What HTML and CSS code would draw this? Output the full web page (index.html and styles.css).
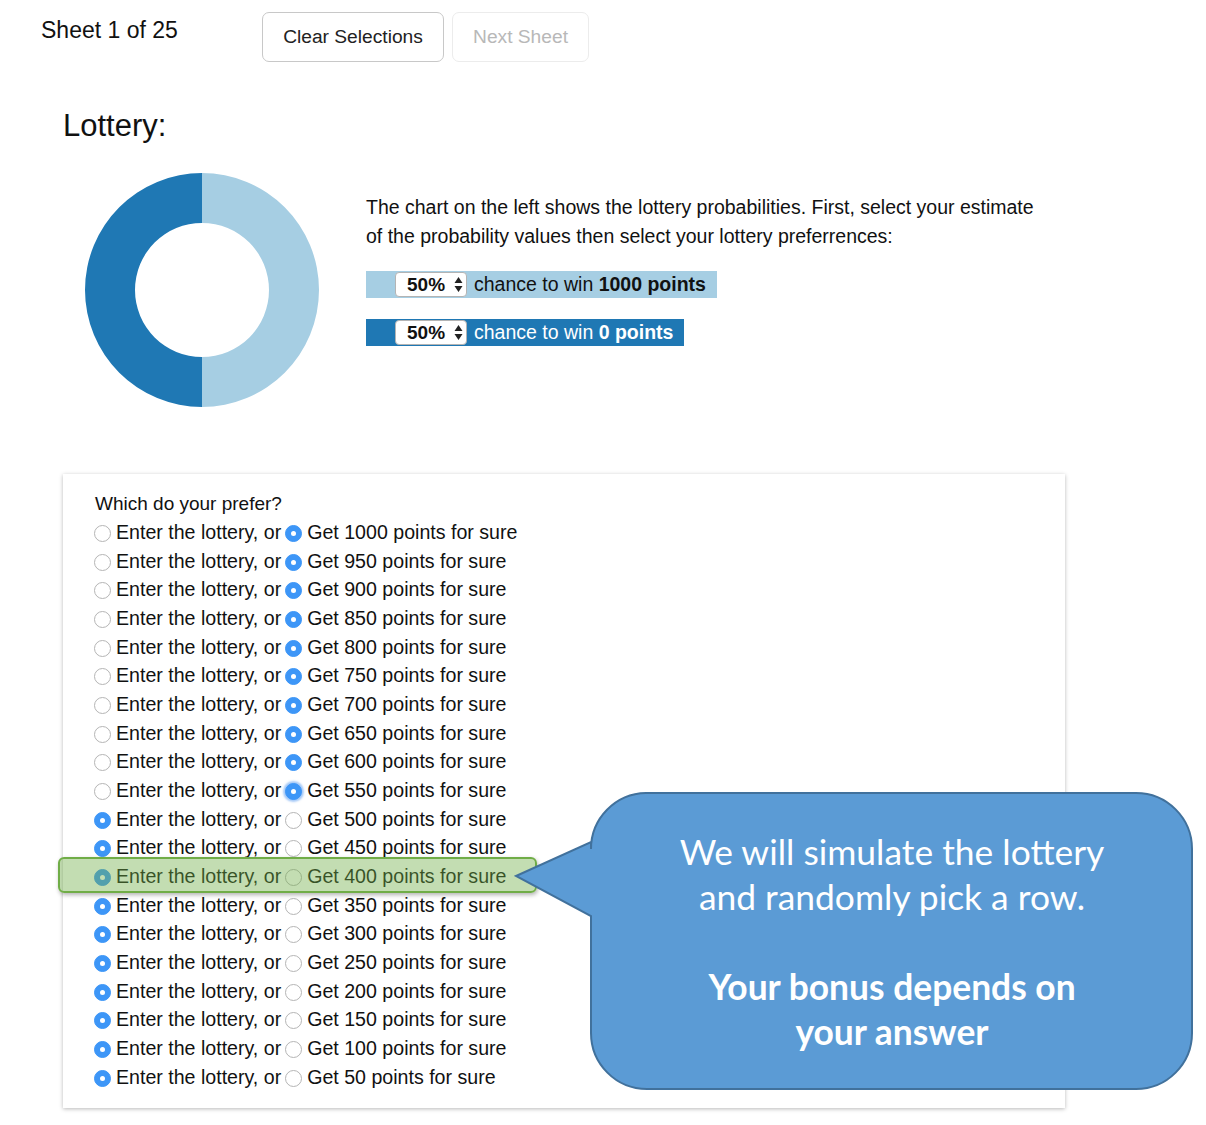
FILE: index.html
```html
<!DOCTYPE html>
<html>
<head>
<meta charset="utf-8">
<link rel="stylesheet" href="styles.css">
</head>
<body>
<div class="page">
  <header class="topbar">
    <div class="sheet-count">Sheet 1 of 25</div>
    <div class="actions">
      <button class="btn">Clear Selections</button>
      <button class="btn btn-disabled">Next Sheet</button>
    </div>
  </header>

  <h1 class="title">Lottery:</h1>

  <section class="lottery">
    <svg class="donut" width="236" height="236" viewBox="0 0 236 236">
      <path d="M118 1 A117 117 0 0 1 118 235 L118 185 A67 67 0 0 0 118 51 Z" fill="#a6cee3"/>
      <path d="M118 1 A117 117 0 0 0 118 235 L118 185 A67 67 0 0 1 118 51 Z" fill="#1f78b4"/>
    </svg>
    <div class="info">
      <p class="intro">The chart on the left shows the lottery probabilities. First, select your estimate of the probability values then select your lottery preferrences:</p>
      <div class="bar bar-light"><span class="pick">50%<svg class="arrows" width="9" height="17" viewBox="0 0 9 17"><path d="M4.5 1 L8.5 7 H0.5 Z M4.5 16 L8.5 10 H0.5 Z" fill="#222"/></svg></span><span>chance to win <b>1000 points</b></span></div>
      <div class="bar bar-dark"><span class="pick">50%<svg class="arrows" width="9" height="17" viewBox="0 0 9 17"><path d="M4.5 1 L8.5 7 H0.5 Z M4.5 16 L8.5 10 H0.5 Z" fill="#222"/></svg></span><span>chance to win <b>0 points</b></span></div>
    </div>
  </section>

  <section class="panel">
    <div class="question">Which do your prefer?</div>
    <div class="rows">
      <div class="row"><span class="radio"></span>Enter the lottery, or<span class="radio on"></span>Get 1000 points for sure</div>
      <div class="row"><span class="radio"></span>Enter the lottery, or<span class="radio on"></span>Get 950 points for sure</div>
      <div class="row"><span class="radio"></span>Enter the lottery, or<span class="radio on"></span>Get 900 points for sure</div>
      <div class="row"><span class="radio"></span>Enter the lottery, or<span class="radio on"></span>Get 850 points for sure</div>
      <div class="row"><span class="radio"></span>Enter the lottery, or<span class="radio on"></span>Get 800 points for sure</div>
      <div class="row"><span class="radio"></span>Enter the lottery, or<span class="radio on"></span>Get 750 points for sure</div>
      <div class="row"><span class="radio"></span>Enter the lottery, or<span class="radio on"></span>Get 700 points for sure</div>
      <div class="row"><span class="radio"></span>Enter the lottery, or<span class="radio on"></span>Get 650 points for sure</div>
      <div class="row"><span class="radio"></span>Enter the lottery, or<span class="radio on"></span>Get 600 points for sure</div>
      <div class="row"><span class="radio"></span>Enter the lottery, or<span class="radio on focus"></span>Get 550 points for sure</div>
      <div class="row"><span class="radio on"></span>Enter the lottery, or<span class="radio"></span>Get 500 points for sure</div>
      <div class="row"><span class="radio on"></span>Enter the lottery, or<span class="radio"></span>Get 450 points for sure</div>
      <div class="row"><span class="radio on"></span>Enter the lottery, or<span class="radio"></span>Get 400 points for sure</div>
      <div class="row"><span class="radio on"></span>Enter the lottery, or<span class="radio"></span>Get 350 points for sure</div>
      <div class="row"><span class="radio on"></span>Enter the lottery, or<span class="radio"></span>Get 300 points for sure</div>
      <div class="row"><span class="radio on"></span>Enter the lottery, or<span class="radio"></span>Get 250 points for sure</div>
      <div class="row"><span class="radio on"></span>Enter the lottery, or<span class="radio"></span>Get 200 points for sure</div>
      <div class="row"><span class="radio on"></span>Enter the lottery, or<span class="radio"></span>Get 150 points for sure</div>
      <div class="row"><span class="radio on"></span>Enter the lottery, or<span class="radio"></span>Get 100 points for sure</div>
      <div class="row"><span class="radio on"></span>Enter the lottery, or<span class="radio"></span>Get 50 points for sure</div>
    </div>
  </section>

  <div class="highlight"></div>

  <div class="callout">
    <svg class="callout-shape" width="682" height="302" viewBox="0 0 682 302">
      <path d="M132 2 H622 A56 56 0 0 1 678 58 V242 A56 56 0 0 1 622 298 H133 A56 56 0 0 1 77 242 V125 L2 85 L77 51 V58 A56 56 0 0 1 132 2 Z" fill="#5b9bd5" stroke="#41719c" stroke-width="2"/>
    </svg>
    <div class="callout-text">
      <div>We will simulate the lottery</div>
      <div>and randomly pick a row.</div>
      <div>&nbsp;</div>
      <div class="strong">Your bonus depends on</div>
      <div class="strong">your answer</div>
    </div>
  </div>
</div>
</body>
</html>
```

FILE: styles.css
```css
* { box-sizing: border-box; }
html, body {
  margin: 0;
  padding: 0;
  background: #ffffff;
}
body {
  font-family: "Liberation Sans", Arial, Helvetica, sans-serif;
  color: #111;
}
.page {
  position: relative;
  width: 1206px;
  height: 1125px;
}
.topbar {
  display: flex;
  align-items: flex-start;
  padding: 12px 0 0 41px;
}
.sheet-count {
  font-size: 23px;
  line-height: 36px;
  width: 221px;
}
.actions {
  display: flex;
  gap: 8px;
}
.btn {
  height: 50px;
  font-family: "Liberation Sans", Arial, sans-serif;
  font-size: 19.2px;
  color: #222;
  background: #fff;
  border: 1px solid #c8c8c8;
  border-radius: 7px;
  padding: 0;
  width: 182px;
}
.btn-disabled {
  color: #b8b8b8;
  border-color: #ececec;
  width: 137px;
}
.title {
  font-weight: normal;
  font-size: 31px;
  line-height: 36px;
  margin: 46px 0 0 63px;
}
.lottery {
  display: flex;
  align-items: flex-start;
  margin-top: 28px;
  padding-left: 84px;
}
.donut {
  display: block;
  flex: none;
}
.info {
  margin-left: 46px;
  padding-top: 21px;
}
.intro {
  margin: 0;
  font-size: 19.5px;
  line-height: 29px;
  width: 676px;
}
.bar {
  display: flex;
  width: fit-content;
  align-items: center;
  height: 27px;
  padding: 0 11px 0 29px;
  font-size: 19.5px;
  gap: 7px;
}
.bar-light {
  background: #a6cee3;
  color: #111;
  margin-top: 20px;
}
.bar-dark {
  background: #1f78b4;
  color: #fff;
  margin-top: 21px;
}
.pick {
  display: inline-flex;
  align-items: center;
  justify-content: space-between;
  height: 25px;
  width: 72px;
  padding: 0 3px 0 11px;
  background: #fff;
  border: 1px solid #b4b4b4;
  border-radius: 4px;
  color: #111;
  font-weight: bold;
  font-size: 19px;
}
.arrows {
  display: block;
  flex: none;
}
.panel {
  margin: 66px 0 0 63px;
  width: 1002px;
  height: 634px;
  padding: 15px 0 0 31px;
  background: #fff;
  box-shadow: 0 1px 4px rgba(0, 0, 0, 0.28);
  font-size: 19.6px;
}
.question {
  font-size: 19px;
  line-height: 29px;
  padding-left: 1px;
}
.row {
  display: flex;
  align-items: center;
  height: 28.68px;
  white-space: nowrap;
}
.radio {
  flex: none;
  width: 17px;
  height: 17px;
  border-radius: 50%;
  border: 1px solid #b5b5b5;
  background: #fff;
  margin: 2px 5px 0 0;
  position: relative;
}
.row .radio:nth-of-type(2) { margin-left: 4px; }
.radio.on {
  background: #3d96f7;
  border-color: #3d96f7;
}
.radio.on::after {
  content: "";
  position: absolute;
  left: 5px;
  top: 5px;
  width: 5px;
  height: 5px;
  border-radius: 50%;
  background: #fff;
}
.radio.focus {
  box-shadow: 0 0 2px 2px rgba(80, 150, 240, 0.5);
}
.highlight {
  position: absolute;
  left: 58px;
  top: 857px;
  width: 479px;
  height: 36px;
  border: 2px solid #70ad47;
  border-radius: 6px;
  background: rgba(112, 173, 71, 0.42);
  box-shadow: 1px 2px 4px rgba(0, 0, 0, 0.3);
}
.callout {
  position: absolute;
  left: 514px;
  top: 791px;
  width: 682px;
  height: 302px;
}
.callout-shape {
  position: absolute;
  left: 0;
  top: 0;
}
.callout-text {
  position: absolute;
  left: 78px;
  top: 3px;
  width: 600px;
  height: 294px;
  display: flex;
  flex-direction: column;
  justify-content: center;
  align-items: center;
  color: #fff;
  font-family: Lato, "Open Sans", sans-serif;
  font-size: 35.4px;
  line-height: 45px;
  text-align: center;
}
.callout-text .strong {
  font-weight: bold;
}
```
